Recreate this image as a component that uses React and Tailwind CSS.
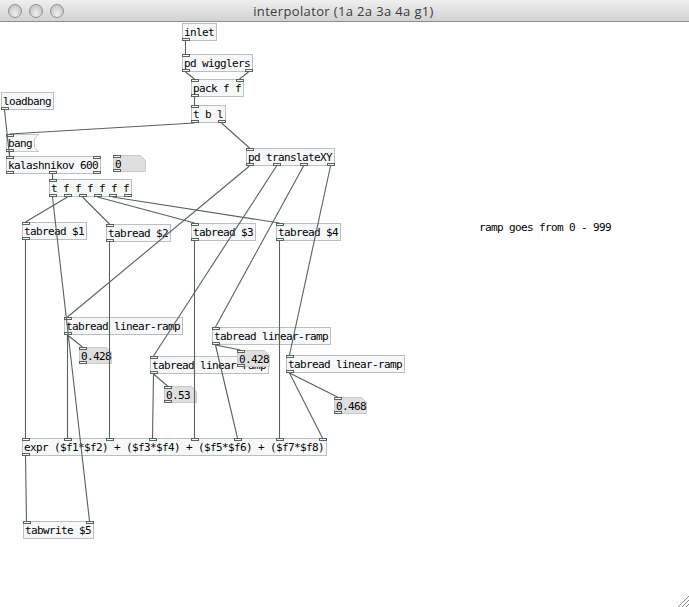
import React from "react";

const IO_WIDTH = 8;

// Every object on the patch canvas; coordinates are relative to the canvas,
// which starts right below the title bar.
const nodes = {
  inlet: { x: 182, y: 1, text: "inlet", ins: 0, outs: 1 },
  wigglers: { x: 182, y: 32, text: "pd wigglers", ins: 1, outs: 2 },
  pack: { x: 191, y: 57, text: "pack f f", ins: 2, outs: 1 },
  tbl: { x: 191, y: 83, text: "t b l", ins: 1, outs: 2 },
  translate: { x: 246, y: 126, text: "pd translateXY", ins: 1, outs: 4 },
  loadbang: { x: 1, y: 70, text: "loadbang", ins: 0, outs: 1 },
  bang: { x: 6, y: 112, w: 33, kind: "message", text: "bang", ins: 1, outs: 1 },
  kalash: { x: 6, y: 134, text: "kalashnikov 600", ins: 2, outs: 3 },
  zero: { x: 113, y: 133, w: 33, kind: "number", text: "0", ins: 1, outs: 1 },
  trig: { x: 49, y: 157, text: "t f f f f f f", ins: 1, outs: 6 },
  tab1: { x: 22, y: 200, text: "tabread $1", ins: 1, outs: 1 },
  tab2: { x: 106, y: 202, text: "tabread $2", ins: 1, outs: 1 },
  tab3: { x: 191, y: 201, text: "tabread $3", ins: 1, outs: 1 },
  tab4: { x: 276, y: 201, text: "tabread $4", ins: 1, outs: 1 },
  ramp1: { x: 64, y: 295, text: "tabread linear-ramp", ins: 1, outs: 1 },
  ramp2: { x: 150, y: 334, text: "tabread linear-ramp", ins: 1, outs: 1 },
  ramp3: { x: 212, y: 305, text: "tabread linear-ramp", ins: 1, outs: 1 },
  ramp4: { x: 286, y: 333, text: "tabread linear-ramp", ins: 1, outs: 1 },
  num1: { x: 79, y: 325, w: 33, kind: "number", text: "0.428", ins: 1, outs: 1 },
  num2: { x: 164, y: 364, w: 33, kind: "number", text: "0.53", ins: 1, outs: 1 },
  num3: { x: 237, y: 328, w: 33, kind: "number", text: "0.428", ins: 1, outs: 1 },
  num4: { x: 334, y: 375, w: 33, kind: "number", text: "0.468", ins: 1, outs: 1 },
  expr: {
    x: 22,
    y: 416,
    text: "expr ($f1*$f2) + ($f3*$f4) + ($f5*$f6) + ($f7*$f8)",
    ins: 8,
    outs: 1,
  },
  tabwrite: { x: 23, y: 499, text: "tabwrite $5", ins: 2, outs: 0 },
};

// [source, outlet, target, inlet]
const wires = [
  ["inlet", 0, "wigglers", 0],
  ["wigglers", 0, "pack", 0],
  ["wigglers", 1, "pack", 1],
  ["pack", 0, "tbl", 0],
  ["tbl", 0, "bang", 0],
  ["tbl", 1, "translate", 0],
  ["loadbang", 0, "kalash", 0],
  ["bang", 0, "kalash", 0],
  ["kalash", 1, "trig", 0],
  ["trig", 0, "tabwrite", 1],
  ["trig", 1, "tab1", 0],
  ["trig", 2, "tab2", 0],
  ["trig", 3, "tab3", 0],
  ["trig", 4, "tab4", 0],
  ["translate", 0, "ramp1", 0],
  ["translate", 1, "ramp2", 0],
  ["translate", 2, "ramp3", 0],
  ["translate", 3, "ramp4", 0],
  ["ramp1", 0, "num1", 0],
  ["ramp2", 0, "num2", 0],
  ["ramp3", 0, "num3", 0],
  ["ramp4", 0, "num4", 0],
  ["tab1", 0, "expr", 0],
  ["ramp1", 0, "expr", 1],
  ["tab2", 0, "expr", 2],
  ["ramp2", 0, "expr", 3],
  ["tab3", 0, "expr", 4],
  ["ramp3", 0, "expr", 5],
  ["tab4", 0, "expr", 6],
  ["ramp4", 0, "expr", 7],
  ["expr", 0, "tabwrite", 0],
];

const widthOf = (n) => n.w ?? n.text.length * 6 + 5;
const heightOf = (n) => (n.kind === "number" ? 17 : 18);
const portX = (n, i, count) =>
  count > 1 ? Math.floor(((widthOf(n) - IO_WIDTH) * i) / (count - 1)) : 0;

function Ports({ node, count, side }) {
  return Array.from({ length: count }, (_, i) => (
    <span
      key={i}
      className={`absolute h-[3px] w-2 border border-[#56655a] bg-[#f4f8f4] ${
        side === "in" ? "top-0" : "bottom-0"
      }`}
      style={{ left: portX(node, i, count) }}
    />
  ));
}

function Shape({ node }) {
  const w = widthOf(node) - 0.5;
  const h = heightOf(node) - 0.5;
  const number = node.kind === "number";
  const d = number
    ? `M.5 .5H${w - 5}L${w} 5.5V${h}H.5Z`
    : `M.5 .5H${w}L${w - 4} 4.5V${h - 4}L${w} ${h}H.5Z`;
  return (
    <svg className="absolute inset-0 h-full w-full overflow-visible">
      <path d={d} fill={number ? "#dfdfdf" : "#f6f8f8"} stroke={number ? "#c9cbc9" : "#c4c7c7"} />
    </svg>
  );
}

function Node({ node }) {
  return (
    <div
      className={`absolute flex items-center pt-0.5 ${
        node.kind ? "pl-[2px]" : "border border-[#bcbfc0] bg-[#f6f8f9] pl-px"
      }`}
      style={{ left: node.x, top: node.y, width: widthOf(node), height: heightOf(node) }}
    >
      {node.kind && <Shape node={node} />}
      <span className="relative whitespace-pre">{node.text}</span>
      <div className={`absolute ${node.kind ? "inset-0" : "-inset-px"}`}>
        <Ports node={node} count={node.ins} side="in" />
        <Ports node={node} count={node.outs} side="out" />
      </div>
    </div>
  );
}

function Wires() {
  return (
    <svg className="absolute inset-0" width="689" height="585" stroke="#56635a" strokeWidth="1.1">
      {wires.map(([from, o, to, i]) => {
        const a = nodes[from];
        const b = nodes[to];
        return (
          <line
            key={`${from}${o}${to}${i}`}
            x1={a.x + portX(a, o, a.outs) + 3.5}
            y1={a.y + heightOf(a)}
            x2={b.x + portX(b, i, b.ins) + 3.5}
            y2={b.y}
          />
        );
      })}
    </svg>
  );
}

function TitleBar() {
  return (
    <header className="grid h-[22px] grid-cols-[1fr_auto_1fr] items-center border-b border-[#8e8e8e] bg-linear-to-b from-[#efefef] to-[#d2d2d2] pl-2 pr-2.5">
      <div className="flex gap-[7px]">
        {[0, 1, 2].map((i) => (
          <span
            key={i}
            className="size-3.5 rounded-full border border-[#8f8f8f] bg-radial-[at_50%_75%] from-[#f0f0f0] to-[#b9b9b9]"
          />
        ))}
      </div>
      <h1 className="whitespace-nowrap font-['Open_Sans',sans-serif] text-[13px] leading-[20px] tracking-[0.36px] text-[#3c3c3c]">
        interpolator (1a 2a 3a 4a g1)
      </h1>
    </header>
  );
}

export default function App() {
  return (
    <div className="flex h-[607px] w-[689px] flex-col overflow-hidden bg-white">
      <TitleBar />
      <main className="relative flex-1 overflow-hidden font-['DejaVu_Sans_Mono',monospace] text-[11px] leading-[14px] tracking-[-0.622px] text-black">
        {Object.values(nodes).map((node) => (
          <Node key={`${node.x},${node.y}`} node={node} />
        ))}
        <span className="absolute left-[479px] top-[199px] whitespace-pre">ramp goes from 0 - 999</span>
        <Wires />
        <svg className="absolute bottom-0 right-0" width="12" height="12" stroke="#858585" strokeWidth="1">
          <path d="M1 12L12 1M5 12L12 5M9 12L12 9" />
        </svg>
      </main>
    </div>
  );
}
